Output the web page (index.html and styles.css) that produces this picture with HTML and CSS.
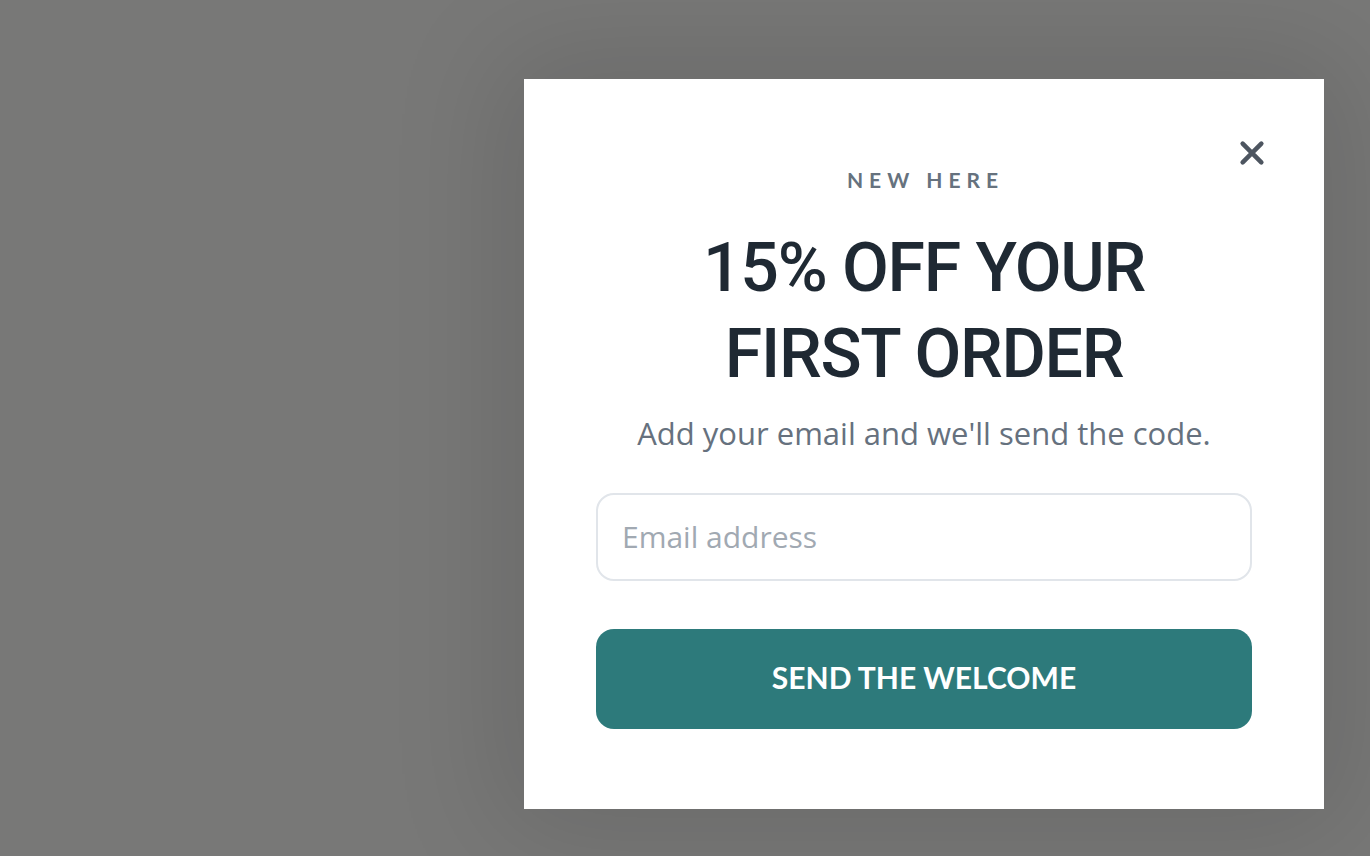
FILE: index.html
```html
<!DOCTYPE html>
<html lang="en">
<head>
<meta charset="utf-8">
<title>Welcome offer</title>
<link rel="stylesheet" href="styles.css">
</head>
<body>
<div class="overlay">
  <div class="modal" role="dialog" aria-labelledby="offer-title">
    <button class="close" type="button" aria-label="Close">
      <svg viewBox="0 0 24 24" width="32" height="32" aria-hidden="true">
        <path d="M5 5 L19 19 M19 5 L5 19" fill="none" stroke="currentColor" stroke-width="3.4" stroke-linecap="round"/>
      </svg>
    </button>
    <p class="eyebrow">NEW HERE</p>
    <h1 class="title" id="offer-title">15% OFF YOUR<br>FIRST ORDER</h1>
    <p class="subtitle">Add your email and we'll send the code.</p>
    <form class="form">
      <input class="email" type="email" placeholder="Email address">
      <button class="submit" type="button">SEND THE WELCOME</button>
    </form>
  </div>
</div>
</body>
</html>
```
FILE: styles.css
```css
* { box-sizing: border-box; }
html, body { margin: 0; padding: 0; height: 100%; }
body {
  font-family: "Lato", "Noto Sans", sans-serif;
  background: #787877;
}
.overlay {
  width: 1370px;
  height: 856px;
  display: flex;
  justify-content: flex-end;
  align-items: flex-start;
  padding: 79px 46px 0 0;
  background: #787877;
}
.modal {
  position: relative;
  width: 800px;
  height: 730px;
  background: #ffffff;
  padding: 0 72px;
  display: flex;
  flex-direction: column;
  align-items: center;
  box-shadow: 0 0 110px 20px rgba(0,0,0,0.12);
}
.close {
  position: absolute;
  top: 58px;
  right: 56px;
  width: 32px;
  height: 32px;
  padding: 0;
  border: 0;
  background: transparent;
  color: #4d5560;
  cursor: pointer;
  display: flex;
}
.eyebrow {
  margin: 86px -3px 0 0;
  font-size: 21px;
  line-height: 30px;
  font-weight: 700;
  letter-spacing: 6px;
  color: #66727e;
}
.title {
  margin: 30px 0 0;
  font-family: "Roboto", "Lato", sans-serif;
  font-size: 68px;
  line-height: 86px;
  font-weight: 500;
  letter-spacing: -1.3px;
  color: #1f2933;
  text-align: center;
}
.subtitle {
  margin: 16px 0 0;
  font-family: "Open Sans", "Lato", sans-serif;
  font-size: 31px;
  line-height: 40px;
  color: #66717e;
  text-align: center;
}
.form {
  width: 100%;
  margin-top: 40px;
  display: flex;
  flex-direction: column;
  gap: 48px;
}
.email {
  width: 100%;
  height: 88px;
  border: 2px solid #e1e5ea;
  border-radius: 18px;
  padding: 0 24px 2px;
  font-family: "Open Sans", "Lato", sans-serif;
  font-size: 30px;
  color: #1f2933;
  background: #fff;
  outline: none;
}
.email::placeholder { color: #a1a9b2; }
.submit {
  width: 100%;
  height: 100px;
  border: 0;
  border-radius: 18px;
  padding: 0 0 4px;
  background: #2d7a7b;
  color: #ffffff;
  font-family: inherit;
  font-size: 30px;
  font-weight: 700;
  cursor: pointer;
}
```
